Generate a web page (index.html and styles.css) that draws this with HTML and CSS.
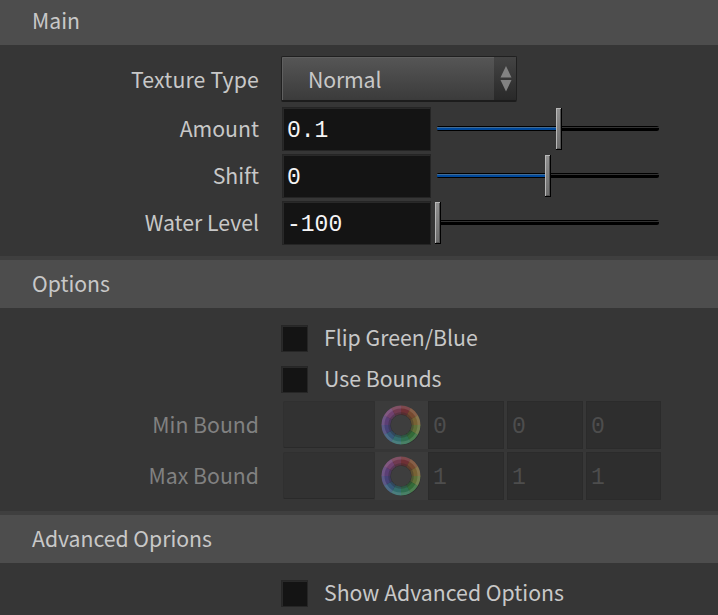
FILE: index.html
```html
<!DOCTYPE html>
<html lang="en">
<head>
<meta charset="utf-8">
<title>Parameters</title>
<link rel="stylesheet" href="styles.css">
</head>
<body>
<svg class="defs" width="0" height="0" aria-hidden="true">
  <defs>
    <symbol id="wheel" viewBox="0 0 42 42">
      <circle cx="22.5" cy="22.5" r="18" fill="#2b2b2b"/>
      <g fill="none" stroke-width="9" stroke-dasharray="7.95 86.8">
        <circle cx="21" cy="21" r="15" stroke="#6e3035" transform="rotate(-90 21 21)"/>
        <circle cx="21" cy="21" r="15" stroke="#76492f" transform="rotate(-60 21 21)"/>
        <circle cx="21" cy="21" r="15" stroke="#776234" transform="rotate(-30 21 21)"/>
        <circle cx="21" cy="21" r="15" stroke="#5f7038" transform="rotate(0 21 21)"/>
        <circle cx="21" cy="21" r="15" stroke="#336b38" transform="rotate(30 21 21)"/>
        <circle cx="21" cy="21" r="15" stroke="#306f51" transform="rotate(60 21 21)"/>
        <circle cx="21" cy="21" r="15" stroke="#336d6d" transform="rotate(90 21 21)"/>
        <circle cx="21" cy="21" r="15" stroke="#355878" transform="rotate(120 21 21)"/>
        <circle cx="21" cy="21" r="15" stroke="#464277" transform="rotate(150 21 21)"/>
        <circle cx="21" cy="21" r="15" stroke="#5b3f75" transform="rotate(180 21 21)"/>
        <circle cx="21" cy="21" r="15" stroke="#70416f" transform="rotate(210 21 21)"/>
        <circle cx="21" cy="21" r="15" stroke="#703a50" transform="rotate(240 21 21)"/>
      </g>
      <circle cx="21" cy="21" r="18" fill="none" stroke="#fff" stroke-opacity=".12" stroke-width="3"/>
      <circle cx="21" cy="21" r="11.500" fill="none" stroke="#2c2c2c" stroke-opacity=".35" stroke-width="2.5"/>
      <circle cx="21" cy="21" r="10.300" fill="#3e3e3e"/>
    </symbol>
  </defs>
</svg>
<main class="panel">
  <h2 class="heading heading-first">Main</h2>
  <section class="group group-main">
    <div class="row row-select">
      <span class="label">Texture Type</span>
      <div class="select"><span class="select-value">Normal</span>
        <span class="select-arrows"><svg width="12" height="26" viewBox="0 0 12 26"><path d="M6 0 11.5 11.5H.5ZM6 25.500 11.500 14H.5Z" fill="#828282"/></svg></span>
      </div>
    </div>
    <div class="row row-number">
      <span class="label">Amount</span><span class="field number">0.1</span>
      <div class="slider"><div class="track"><div class="fill" style="width:120px"></div></div><div class="handle" style="left:119px"></div></div>
    </div>
    <div class="row row-number">
      <span class="label">Shift</span><span class="field number">0</span>
      <div class="slider"><div class="track"><div class="fill" style="width:109px"></div></div><div class="handle" style="left:108px"></div></div>
    </div>
    <div class="row row-number">
      <span class="label">Water Level</span><span class="field number">-100</span>
      <div class="slider"><div class="track"></div><div class="handle" style="left:-2px"></div></div>
    </div>
  </section>
  <h2 class="heading">Options</h2>
  <section class="group group-options">
    <div class="row row-check"><span class="box"></span><span class="caption">Flip Green/Blue</span></div>
    <div class="row row-check"><span class="box"></span><span class="caption">Use Bounds</span></div>
    <div class="row row-color">
      <span class="label">Min Bound</span><span class="swatch"></span>
      <span class="wheel"><svg width="42" height="42"><use href="#wheel"/></svg></span>
      <span class="channels"><span class="channel">0</span><span class="channel">0</span><span class="channel">0</span></span>
    </div>
    <div class="row row-color">
      <span class="label">Max Bound</span><span class="swatch"></span>
      <span class="wheel"><svg width="42" height="42"><use href="#wheel"/></svg></span>
      <span class="channels"><span class="channel">1</span><span class="channel">1</span><span class="channel">1</span></span>
    </div>
  </section>
  <h2 class="heading">Advanced Oprions</h2>
  <section class="group group-advanced">
    <div class="row row-check"><span class="box"></span><span class="caption">Show Advanced Options</span></div>
  </section>
</main>
</body>
</html>
```
FILE: styles.css
```css
* { box-sizing: border-box; }
body {
  margin: 0;
  background: #363636;
  color: #c8c8c8;
  font: 21.25px/30px "Noto Sans CJK SC", "Noto Sans", sans-serif;
  overflow: hidden;
}
.defs { display: block; height: 0; }
.panel { height: 615px; overflow: hidden; }
.heading {
  margin: 0;
  height: 52px;
  padding: 8px 32px 0;
  border-top: 4px solid #3f3f3f;
  background: #4d4d4d;
  font-size: 21.2px;
  font-weight: 400;
}
.heading-first { height: 45px; border-top: 0; padding-top: 5px; }
.group-main { height: 211px; padding-top: 11px; }
.group-options { height: 203px; padding-top: 10px; }
.group-advanced { padding-top: 10px; }
.row { display: flex; align-items: flex-start; }
.label { flex: none; width: 259px; text-align: right; white-space: nowrap; }
.row-select { height: 49px; }
.row-select .label { margin-top: 8px; letter-spacing: .15px; }
.select {
  display: flex;
  width: 236px;
  height: 46px;
  margin-left: 22px;
  border: 1px solid #202020;
  border-bottom: 2px solid #1c1c1c;
  border-radius: 2px;
  background: linear-gradient(#565656, #3b3b3b);
  box-shadow: inset 1px 1px #606060;
}
.select-value { flex: 1; padding: 7px 0 0 26px; letter-spacing: -.15px; }
.select-arrows {
  display: flex;
  align-items: center;
  justify-content: center;
  width: 22px;
  padding: 1px 0 0 2px;
  background: linear-gradient(#444, #292929);
}
.row-number { height: 47px; padding-top: 2px; }
.row-number .label { margin-top: 6px; }
.field, .channel { font-family: "Liberation Mono", monospace; font-size: 23px; }
.number {
  width: 149px;
  height: 44px;
  margin-left: 23px;
  padding: 8px 0 0 4px;
  border: 1px solid #252525;
  background: #141414;
  box-shadow: inset 1px 1px #292929;
  color: #f5f5f5;
}
.slider { position: relative; width: 222px; height: 44px; margin-left: 6px; }
.track {
  height: 5px;
  margin-top: 19px;
  border-radius: 2px;
  background: linear-gradient(#000 1px, #333 1px, #333 2px, #000 2px);
}
.fill {
  height: 5px;
  border-radius: 2px 0 0 2px;
  background: linear-gradient(#000 1px, #426b93 1px, #426b93 2px, #00499c 2px, #00499c 4px, #000 4px);
}
.handle {
  position: absolute;
  top: 1px;
  width: 6px;
  height: 42px;
  border: solid #000;
  border-width: 0 1px 1px 0;
  background: linear-gradient(#919191, #6c6c6c);
  box-shadow: inset 1px 1px #b8b8b8, inset -1px -1px #515151;
}
.row-check { height: 41px; padding-top: 7px; }
.box {
  width: 27px;
  height: 27px;
  margin-left: 281px;
  border: 1px solid #262626;
  background: #141414;
  box-shadow: inset 1px 1px #292929;
}
.caption { margin: -3px 0 0 16px; }
.row-color { height: 51px; padding-top: 1px; }
.row-color .label { margin-top: 8px; color: #818181; }
.swatch {
  width: 92px;
  height: 47px;
  margin-left: 24px;
  border: 1px solid #303030;
  border-bottom-color: #2a2a2a;
  border-radius: 2px;
  background: #323232;
}
.wheel { display: flex; align-items: center; justify-content: center; width: 53px; height: 48px; padding-right: 2px; background: #3b3b3b; }
.channels { display: grid; grid-template-columns: 76px 76px 75px; gap: 3px; background: #373737; }
.channel { height: 48px; padding: 10px 0 0 4px; border: 1px solid #2b2b2b; background: #2e2e2e; color: #4d4d4d; }
```
